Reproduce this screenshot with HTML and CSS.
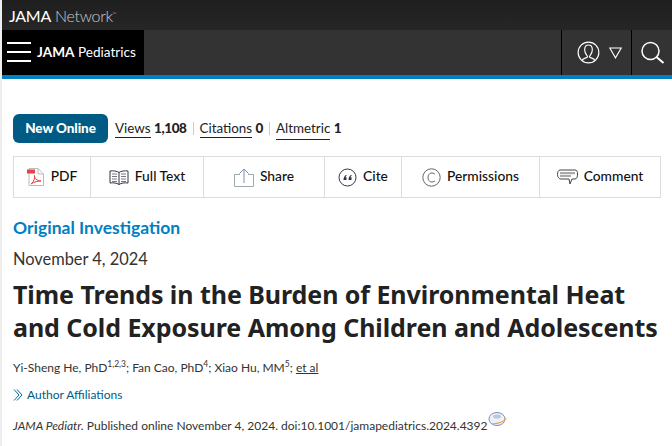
FILE: index.html
```html
<!DOCTYPE html>
<html lang="en">
<head>
    <meta charset="UTF-8">
    <title>Time Trends in the Burden of Environmental Heat and Cold Exposure</title>
    <link rel="stylesheet" href="styles.css">
</head>
<body>
    <div class="top-bar">
        <span class="network"><b>JAMA</b> Network<sup>™</sup></span>
    </div>
    <div class="nav-bar">
        <div class="brand">
            <div class="burger"><span></span><span></span><span></span></div>
            <span class="brand-name"><b>JAMA</b> Pediatrics</span>
        </div>
        <div class="nav-right">
            <div class="nav-cell account">
                <svg width="23" height="23" viewBox="0 0 24 24" fill="none" stroke="#fff" stroke-width="1.200">
                    <circle cx="12" cy="12" r="10.800"/>
                    <path d="M5 20.500c1-2.500 5-2.500 6-4 0-1.500-3-3-3-7.500 0-3 1.800-4.800 4-4.800s4 1.800 4 4.800c0 4.500-3 6-3 7.500 1 1.500 5 1.500 6 4"/>
                </svg>
                <svg width="13" height="12" viewBox="0 0 13 12" fill="none" stroke="#fff" stroke-width="1.100">
                    <path d="M.8 1h11.400L6.500 10.800z"/>
                </svg>
            </div>
            <div class="nav-cell search">
                <svg width="24" height="24" viewBox="0 0 24 24" fill="none" stroke="#fff" stroke-width="1.500">
                    <circle cx="9.500" cy="10" r="8.500"/>
                    <path d="M15.500 16l7 6" stroke-width="2"/>
                </svg>
            </div>
        </div>
    </div>

    <main class="article">
        <div class="meta-row">
            <span class="pill">New Online</span>
            <span class="metric"><a>Views</a> <b>1,108</b></span>
            <span class="sep"></span>
            <span class="metric"><a>Citations</a> <b>0</b></span>
            <span class="sep"></span>
            <span class="metric"><a class="long">Altmetric</a> <b>1</b></span>
        </div>

        <div class="toolbar">
            <div class="tool tool-pdf">
                <svg width="18" height="18" viewBox="0 0 18 18" fill="none">
                    <path d="M2 .500h9l5.500 5.500v11.500H2z" fill="#fff" stroke="#aaa" stroke-width=".8"/>
                    <path d="M11 .500V6h5.500" stroke="#aaa" stroke-width=".8"/>
                    <rect x="0" y="1.500" width="8" height="4" fill="#e8414a"/>
                    <path d="M4 16c3-2 4-6 3.500-8.500 0 3 2 5 6.500 5.500-3 0-7 1-10 3z" stroke="#e04040"/>
                </svg>
                <span>PDF</span>
            </div>
            <div class="tool tool-full">
                <svg width="20" height="17" viewBox="0 0 20 16" fill="none" stroke="#334" stroke-width="1">
                    <path d="M10 3C8 1.500 4 1 1 1.500v12c3-.5 7 0 9 1.500 2-1.500 6-2 9-1.500v-12C16 1 12 1.500 10 3zv12"/>
                    <path d="M3 4.500h5M3 7h5M3 9.500h5M3 12h5M12 4.500h5M12 7h5M12 9.500h5M12 12h5" stroke="#667" stroke-width=".9"/>
                </svg>
                <span>Full Text</span>
            </div>
            <div class="tool tool-share">
                <svg width="20" height="19" viewBox="0 0 20 19" fill="none" stroke="#7d8db5" stroke-width="1">
                    <path d="M6 6.500H.5v12h19v-12H14" stroke="#9aa"/>
                    <path d="M10 15V1M5.500 5.500L10 1l4.500 4.500"/>
                </svg>
                <span>Share</span>
            </div>
            <div class="tool tool-cite">
                <svg width="19" height="19" viewBox="0 0 19 19" fill="none" stroke="#334">
                    <circle cx="9.500" cy="9.500" r="8.500"/>
                    <path d="M8.500 6.800C6.500 7.800 5.500 9.300 5.500 12h3V9.300H7.300c.2-.6.600-1 1.200-1.400zM13.500 6.800c-2 1-3 2.500-3 5.200h3V9.300h-1.200c.2-.6.600-1 1.200-1.400z" fill="#334" stroke="none"/>
                </svg>
                <span>Cite</span>
            </div>
            <div class="tool tool-perm">
                <svg width="19" height="19" viewBox="0 0 19 19" fill="none" stroke="#555" stroke-width=".9">
                    <circle cx="9.500" cy="9.500" r="8.700"/>
                    <path d="M13 6.300C11 4 6 4.500 6 9.500s5 5.500 7 3.200"/>
                </svg>
                <span>Permissions</span>
            </div>
            <div class="tool tool-comment">
                <svg width="21" height="16" viewBox="0 0 21 16" fill="none">
                    <path d="M3 1h15c2 0 2.500 1.500 2.500 4s-.5 5-2.500 5h-3L13 15l-1-5H4C2 10 .5 8 .5 5.500S1.500 1 3 1z" fill="#fff" stroke="#444"/>
                    <path d="M3 4.200h15M3 7h11" stroke="#aaa" stroke-width="2.200"/>
                </svg>
                <span>Comment</span>
            </div>
        </div>

        <div class="kicker">Original Investigation</div>
        <div class="date">November 4, 2024</div>
        <h1>Time Trends in the Burden of Environmental Heat and Cold Exposure Among Children and Adolescents</h1>
        <div class="authors">Yi-Sheng He, PhD<sup>1,2,3</sup>; Fan Cao, PhD<sup>4</sup>; Xiao Hu, MM<sup>5</sup>; <a>et al</a></div>
        <div class="affil">
            <svg width="10" height="12" viewBox="0 0 10 12" fill="none" stroke="#006c9c">
                <path d="M1 .500L6 6l-5 5.500M4 .500L9 6l-5 5.500"/>
            </svg>
            <span>Author Affiliations</span>
        </div>
        <div class="citation"><i>JAMA Pediatr.</i> Published online November 4, 2024. doi:10.1001/jamapediatrics.2024.4392<svg class="globe" width="20" height="16" viewBox="0 0 20 16" fill="none">
            <ellipse cx="9" cy="8" rx="8" ry="6.500" fill="#eef2f8" stroke="#7d8db5"/>
            <ellipse cx="9" cy="5.500" rx="4" ry="2" fill="#b8c8de"/>
            <path d="M1.500 12c6 1 14-1 18-6-2 5-11 9-18 6z" fill="#e8a030"/>
        </svg></div>
    </main>
</body>
</html>
```

FILE: styles.css
```css
body {
    margin: 0;
    font-family: "Lato", sans-serif;
    background-color: #fff;
    color: #222;
    border-left: 2px solid #eee;
    height: 446px;
    overflow: hidden;
}
.top-bar {
    height: 30px;
    background: linear-gradient(#1f1f1f, #262626);
    display: flex;
    align-items: center;
    padding-left: 7px;
}
.network {
    color: #ccc;
    font-size: 16px;
    font-weight: 300;
    letter-spacing: -0.3px;
}
.network b {
    color: #fff;
    font-weight: 400;
}
.network sup {
    font-size: 5px;
}
.nav-bar {
    height: 45px;
    background-color: #333;
    border-bottom: 4px solid #0080c0;
    display: flex;
    justify-content: space-between;
}
.brand {
    width: 142px;
    background-color: #000;
    display: flex;
    align-items: center;
    padding-left: 5px;
    padding-bottom: 1px;
    box-sizing: border-box;
    gap: 6px;
}
.burger {
    width: 24px;
    display: flex;
    flex-direction: column;
    gap: 7px;
}
.burger span {
    height: 2px;
    background-color: #fff;
}
.brand-name {
    color: #fff;
    font-size: 13.600px;
}
.nav-right {
    display: flex;
}
.nav-cell {
    height: 45px;
    border-left: 1px solid #000;
    display: flex;
    align-items: center;
    box-sizing: border-box;
}
.account {
    width: 70px;
    padding-left: 15px;
    gap: 9px;
}
.search {
    width: 41px;
    padding-left: 9px;
}
.article {
    padding: 35px 11px 0;
}
.meta-row {
    display: flex;
    align-items: center;
    font-size: 13.400px;
    height: 29px;
}
.pill {
    width: 95px;
    height: 29px;
    line-height: 29px;
    text-align: center;
    background-color: #005b84;
    color: #fff;
    font-size: 13.500px;
    font-weight: 900;
    letter-spacing: -0.1px;
    border-radius: 6px;
    margin-right: 7px;
}
.metric a {
    display: inline-block;
    border-bottom: 1px solid #222;
    line-height: 18px;
}
.metric a.long {
    padding-bottom: 2px;
    margin-bottom: -2px;
}
.metric b {
    font-weight: 900;
    font-size: 13.500px;
    letter-spacing: -0.4px;
}
.sep {
    width: 1px;
    height: 13px;
    background-color: #ccc;
    margin: 0 6px;
}
.toolbar {
    display: flex;
    height: 42px;
    margin-top: 13px;
    border: 1px solid #ddd;
    box-sizing: border-box;
    width: 648px;
}
.tool {
    display: flex;
    align-items: center;
    justify-content: center;
    gap: 6px;
    border-right: 1px solid #ddd;
    font-size: 13.800px;
    font-weight: 500;
    color: #111;
    box-sizing: border-box;
}
.tool span {
    margin-bottom: 3px;
}
.tool:last-child {
    border-right: none;
}
.tool-pdf { width: 77px; }
.tool-full { width: 113px; }
.tool-share { width: 121px; }
.tool-cite { width: 77px; }
.tool-perm { width: 138px; }
.tool-comment { width: 120px; }
.kicker {
    margin-top: 20px;
    color: #0080c0;
    font-size: 17.500px;
    font-weight: 700;
    line-height: 20px;
}
.date {
    margin-top: 11px;
    font-size: 16.400px;
    line-height: 20px;
    color: #333;
}
h1 {
    margin: 9px 0 0;
    font-family: "Noto Sans", sans-serif;
    font-size: 25px;
    letter-spacing: -0.06px;
    line-height: 33px;
    font-weight: 700;
    color: #222;
}
.authors {
    margin-top: 15px;
    font-size: 12px;
    line-height: 18px;
    color: #333;
}
.authors sup {
    font-size: 8.500px;
    line-height: 0;
}
.authors a {
    text-decoration: underline;
}
.affil {
    margin-top: 9px;
    display: flex;
    align-items: center;
    gap: 4px;
    font-size: 12px;
    line-height: 18px;
    color: #005b84;
}
.citation {
    margin-top: 13px;
    font-size: 12px;
    line-height: 18px;
    color: #333;
}
.globe {
    margin-top: -8px;
    vertical-align: 3px;
}
```
